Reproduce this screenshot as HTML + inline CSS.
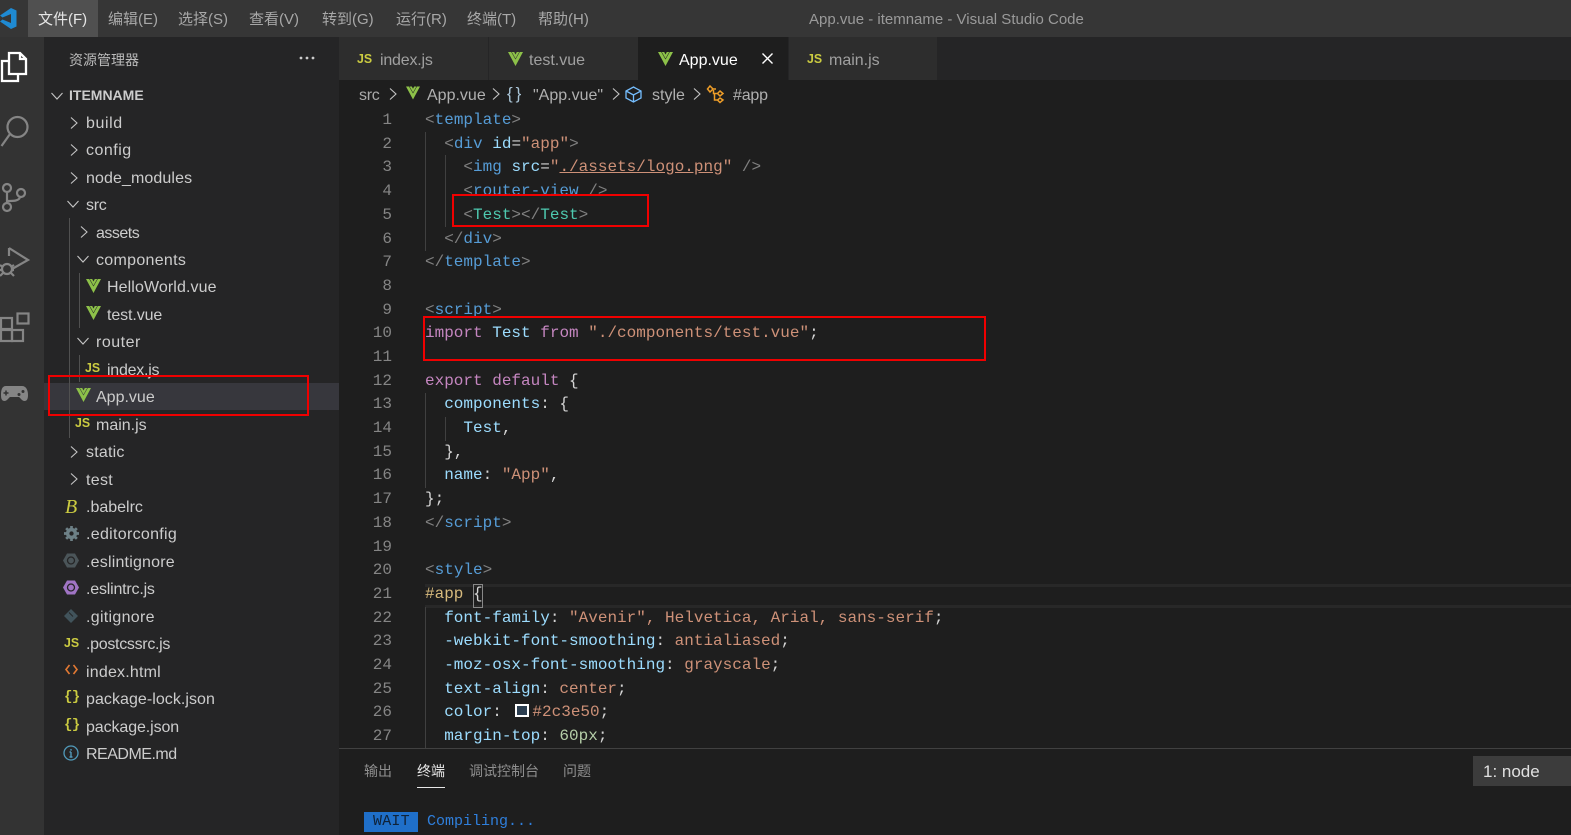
<!DOCTYPE html>
<html><head><meta charset="utf-8"><title>App.vue - itemname - Visual Studio Code</title>
<style>
html,body{margin:0;padding:0;background:#1e1e1e}
#p{position:relative;width:1571px;height:835px;overflow:hidden;background:#1e1e1e;font-family:"Liberation Sans","Noto Sans CJK SC",sans-serif}
#p>*{position:absolute}
.m{top:6px;height:28px;line-height:28px;font-size:15px;color:#a8a8a8;white-space:nowrap}
.r{height:28px;line-height:28px;font-size:16px;color:#cccccc;white-space:nowrap}
.js{font:bold 13px/16px "Liberation Sans",sans-serif;color:#cbcb41;white-space:nowrap;transform:scaleX(.95);transform-origin:left}
.c{left:425px;height:24px;font:16px/24px "Liberation Mono",monospace;color:#d4d4d4;white-space:pre}
.n{left:361px;width:31px;text-align:right;height:24px;font:16px/24px "Liberation Mono",monospace;color:#858585}
.g{width:1px;background:#404040}
.red{border:2px solid #f00000;box-sizing:border-box}
.t{top:37px;height:43px;background:#2d2d2d}
.pt{top:757px;height:28px;line-height:28px;font-size:14px;color:#8f8f8f;white-space:nowrap}
svg{overflow:visible}
.p{color:#808080}.k{color:#569cd6}.a{color:#9cdcfe}.s{color:#ce9178}.q{color:#4ec9b0}.i{color:#c586c0}.d{color:#d7ba7d}.u{color:#b5cea8}
</style></head><body>
<div id="p">
<svg width="0" height="0" style="position:absolute"><defs>
<symbol id="vue" viewBox="0 0 15 14"><polygon fill="#8dc149" points="0,0 3.200,0 7.500,7.500 11.800,0 15,0 7.500,14"/><polygon fill="#8dc149" points="3.800,0 6.200,0 7.500,2.500 8.800,0 11.200,0 7.500,6.500"/></symbol>
<symbol id="cr" viewBox="0 0 8 12"><path d="M1 0.500l6 5.500-6 5.500" fill="none" stroke="#c5c5c5" stroke-width="1.100"/></symbol>
<symbol id="cd" viewBox="0 0 12 8"><path d="M0.500 1l5.500 6 5.500-6" fill="none" stroke="#c5c5c5" stroke-width="1.100"/></symbol>
</defs></svg>

<!-- title bar -->
<div style="left:0;top:0;width:1571px;height:37px;background:#363636"></div>
<div style="left:28px;top:0;width:70px;height:37px;background:#505050"></div>
<svg style="left:0;top:8px" width="17" height="21" viewBox="0 0 17 21"><path d="M11 0l5.500 2.500V18.500L11 21 0 13.500l2.500-2L11 15V6L2.500 9.500 0 7.500z" fill="#1f8ad2"/></svg>
<div class="m" style="left:38px;color:#e6e6e6">文件(F)</div>
<div class="m" style="left:108px">编辑(E)</div>
<div class="m" style="left:178px">选择(S)</div>
<div class="m" style="left:249px">查看(V)</div>
<div class="m" style="left:322px">转到(G)</div>
<div class="m" style="left:396px">运行(R)</div>
<div class="m" style="left:467px">终端(T)</div>
<div class="m" style="left:538px">帮助(H)</div>
<div class="m" style="left:809px;color:#9a9a9a">App.vue - itemname - Visual Studio Code</div>

<!-- activity bar -->
<div style="left:0;top:37px;width:44px;height:798px;background:#333333"></div>
<svg style="left:0;top:50px" width="30" height="34" viewBox="0 0 30 34" fill="none" stroke="#fff" stroke-width="2.300"><path d="M9 3H20L26 9V24H9z"/><path d="M20 3v6h6"/><path d="M8 11H2V31H18V25"/></svg>
<svg style="left:0;top:113px" width="32" height="36" viewBox="0 0 32 36" fill="none" stroke="#858585" stroke-width="2.200"><circle cx="17.500" cy="14" r="10"/><path d="M10 21L1.500 33"/></svg>
<svg style="left:0;top:180px" width="28" height="34" viewBox="0 0 28 34" fill="none" stroke="#858585" stroke-width="2.200"><circle cx="7" cy="8" r="4"/><circle cx="21" cy="13" r="4"/><circle cx="7" cy="27" r="4"/><path d="M7 12V23M7 21C14 21 19 21 20 17"/></svg>
<svg style="left:0;top:245px" width="30" height="34" viewBox="0 0 30 34" fill="none" stroke="#858585" stroke-width="2.200"><path d="M9 3L28 15 12 24"/><path d="M9 3V11"/><circle cx="7" cy="24" r="5"/><path d="M0 20l3 2M14 20l-3 2M0 25h2M12 25h2M0 31l3-3M14 31l-3-3"/></svg>
<svg style="left:0;top:312px" width="30" height="32" viewBox="0 0 30 32" fill="none" stroke="#858585" stroke-width="2.200"><rect x="17.500" y="1.500" width="11" height="10"/><rect x="1" y="6" width="11" height="11"/><rect x="1" y="18" width="11" height="11"/><rect x="12" y="18" width="11" height="11"/></svg>
<svg style="left:0;top:385px" width="29" height="17" viewBox="0 0 29 17"><path d="M6 1H22C26 1 28 5 28 10 28 14 27 16 24.500 16 22 16 20.500 13 19 12H10C8.500 13 7 16 4.500 16 2 16 1 14 1 10 1 5 2 1 6 1z" fill="#858585"/><path d="M6 5.500v5M3.500 8h5" stroke="#333" stroke-width="1.500"/><circle cx="19" cy="9.500" r="1.500" fill="#333"/><circle cx="23" cy="6.500" r="1.500" fill="#333"/></svg>

<!-- sidebar -->
<div style="left:44px;top:37px;width:295px;height:798px;background:#252526"></div>
<div style="left:69px;top:46px;height:28px;line-height:28px;font-size:14px;color:#bbbbbb">资源管理器</div>
<svg style="left:299px;top:56px" width="16" height="4"><circle cx="2" cy="2" r="1.400" fill="#ccc"/><circle cx="8" cy="2" r="1.400" fill="#ccc"/><circle cx="14" cy="2" r="1.400" fill="#ccc"/></svg>
<div style="left:44px;top:383px;width:295px;height:27px;background:#37373d"></div>
<div class="g" style="left:69px;top:218px;height:220px;background:#505050"></div>
<div class="g" style="left:79px;top:273px;height:55px;background:#505050"></div>
<div class="g" style="left:79px;top:355px;height:27px;background:#505050"></div>

<svg style="left:51px;top:92px" width="12" height="8"><use href="#cd"/></svg>
<div class="r" style="left:69px;top:81px;font-size:14px;font-weight:bold">ITEMNAME</div>
<svg style="left:70px;top:117px" width="8" height="12"><use href="#cr"/></svg><div class="r" style="left:86px;top:110px;letter-spacing:.6px">build</div>
<svg style="left:70px;top:144px" width="8" height="12"><use href="#cr"/></svg><div class="r" style="left:86px;top:137px;letter-spacing:.5px">config</div>
<svg style="left:70px;top:172px" width="8" height="12"><use href="#cr"/></svg><div class="r" style="left:86px;top:165px;letter-spacing:.1px">node_modules</div>
<svg style="left:67px;top:200px" width="12" height="8"><use href="#cd"/></svg><div class="r" style="left:86px;top:192px;letter-spacing:-.3px">src</div>
<svg style="left:80px;top:226px" width="8" height="12"><use href="#cr"/></svg><div class="r" style="left:96px;top:220px;letter-spacing:-.5px">assets</div>
<svg style="left:77px;top:255px" width="12" height="8"><use href="#cd"/></svg><div class="r" style="left:96px;top:247px;letter-spacing:.3px">components</div>
<svg style="left:86px;top:279px" width="15" height="14"><use href="#vue"/></svg><div class="r" style="left:107px;top:274px;letter-spacing:.1px">HelloWorld.vue</div>
<svg style="left:86px;top:306px" width="15" height="14"><use href="#vue"/></svg><div class="r" style="left:107px;top:302px;letter-spacing:-.1px">test.vue</div>
<svg style="left:77px;top:337px" width="12" height="8"><use href="#cd"/></svg><div class="r" style="left:96px;top:329px;letter-spacing:.5px">router</div>
<div class="js" style="left:85px;top:360px">JS</div><div class="r" style="left:107px;top:357px;letter-spacing:-.25px">index.js</div>
<svg style="left:76px;top:388px" width="15" height="14"><use href="#vue"/></svg><div class="r" style="left:96px;top:384px">App.vue</div>
<div class="js" style="left:75px;top:415px">JS</div><div class="r" style="left:96px;top:412px">main.js</div>
<svg style="left:70px;top:446px" width="8" height="12"><use href="#cr"/></svg><div class="r" style="left:86px;top:439px;letter-spacing:.2px">static</div>
<svg style="left:70px;top:473px" width="8" height="12"><use href="#cr"/></svg><div class="r" style="left:86px;top:467px;letter-spacing:.3px">test</div>
<div style="left:65px;top:497px;font:italic 20px/20px 'Liberation Serif',serif;color:#cbcb41">B</div><div class="r" style="left:86px;top:494px">.babelrc</div>
<svg style="left:64px;top:526px" width="15" height="15" viewBox="0 0 14 14"><circle cx="7" cy="7" r="3.600" fill="none" stroke="#6d8086" stroke-width="3.200"/><path d="M7 0v3M7 11v3M0 7h3M11 7h3M2 2l2 2M10 10l2 2M12 2l-2 2M2 12l2-2" stroke="#6d8086" stroke-width="2.500"/></svg><div class="r" style="left:86px;top:521px;letter-spacing:.3px">.editorconfig</div>
<svg style="left:63px;top:553px" width="16" height="15" viewBox="0 0 16 15"><polygon points="4,0.500 12,0.500 16,7.500 12,14.500 4,14.500 0,7.500" fill="#4b5559"/><circle cx="8" cy="7.500" r="3.500" fill="none" stroke="#252526" stroke-width="1.300"/></svg><div class="r" style="left:86px;top:549px;letter-spacing:.2px">.eslintignore</div>
<svg style="left:63px;top:580px" width="16" height="15" viewBox="0 0 16 15"><polygon points="4,0.500 12,0.500 16,7.500 12,14.500 4,14.500 0,7.500" fill="#a074c4"/><circle cx="8" cy="7.500" r="3.500" fill="none" stroke="#252526" stroke-width="1.300"/></svg><div class="r" style="left:86px;top:576px;letter-spacing:-.2px">.eslintrc.js</div>
<svg style="left:64px;top:609px" width="14" height="14" viewBox="0 0 14 14"><polygon points="7,0 14,7 7,14 0,7" fill="#41535b"/><path d="M5 3.500l4 4" stroke="#252526"/></svg><div class="r" style="left:86px;top:604px;letter-spacing:.3px">.gitignore</div>
<div class="js" style="left:64px;top:635px">JS</div><div class="r" style="left:86px;top:631px;letter-spacing:-.3px">.postcssrc.js</div>
<svg style="left:65px;top:664px" width="13" height="11" viewBox="0 0 13 11" fill="none" stroke="#e37933" stroke-width="1.600"><path d="M4.500 1L1 5.500 4.500 10M8.500 1L12 5.500 8.500 10"/></svg><div class="r" style="left:86px;top:659px;letter-spacing:.2px">index.html</div>
<div style="left:64px;top:687px;font:bold 14px/20px 'Liberation Mono',monospace;color:#cbcb41;letter-spacing:-.5px">{}</div><div class="r" style="left:86px;top:686px;letter-spacing:.05px">package-lock.json</div>
<div style="left:64px;top:715px;font:bold 14px/20px 'Liberation Mono',monospace;color:#cbcb41;letter-spacing:-.5px">{}</div><div class="r" style="left:86px;top:714px;letter-spacing:-.1px">package.json</div>
<svg style="left:63px;top:745px" width="16" height="16" viewBox="0 0 16 16" fill="none" stroke="#519aba"><circle cx="8" cy="8" r="7" stroke-width="1.300"/><path d="M8 7v5M8 4v1.600M6.500 7H8M6.500 12h3" stroke-width="1.400"/></svg><div class="r" style="left:86px;top:741px;letter-spacing:-.5px">README.md</div>
<div class="red" style="left:48px;top:375px;width:261px;height:41px"></div>

<!-- tabs -->
<div style="left:339px;top:37px;width:1232px;height:43px;background:#252526"></div>
<div class="t" style="left:339px;width:149px"></div>
<div class="t" style="left:489px;width:149px"></div>
<div class="t" style="left:638px;width:150px;background:#1e1e1e"></div>
<div class="t" style="left:789px;width:148px"></div>
<div class="js" style="left:357px;top:51px">JS</div><div class="r" style="left:380px;top:47px;color:#a0a0a0;letter-spacing:-.2px">index.js</div>
<svg style="left:508px;top:52px" width="15" height="14"><use href="#vue"/></svg><div class="r" style="left:529px;top:47px;color:#a0a0a0">test.vue</div>
<svg style="left:658px;top:52px" width="15" height="14"><use href="#vue"/></svg><div class="r" style="left:679px;top:47px;color:#fff">App.vue</div>
<svg style="left:762px;top:53px" width="11" height="11" viewBox="0 0 11 11"><path d="M0.500 0.500l10 10M10.500 0.500l-10 10" stroke="#fff" stroke-width="1.400"/></svg>
<div class="js" style="left:807px;top:51px">JS</div><div class="r" style="left:829px;top:47px;color:#a0a0a0">main.js</div>

<!-- breadcrumb -->
<div class="r" style="left:359px;top:82px;color:#a9a9a9;letter-spacing:-.3px">src</div>
<svg style="left:389px;top:88px" width="8" height="12"><use href="#cr"/></svg>
<svg style="left:406px;top:86px" width="14" height="14"><use href="#vue"/></svg>
<div class="r" style="left:427px;top:82px;color:#b0b0b0">App.vue</div>
<svg style="left:492px;top:88px" width="8" height="12"><use href="#cr"/></svg>
<div style="left:507px;top:84px;font:17px/20px 'Liberation Sans',sans-serif;color:#a9c4d6;letter-spacing:3px">{}</div>
<div class="r" style="left:533px;top:82px;color:#b0b0b0">"App.vue"</div>
<svg style="left:612px;top:88px" width="8" height="12"><use href="#cr"/></svg>
<svg style="left:625px;top:86px" width="17" height="17" viewBox="0 0 17 17" fill="none" stroke="#75beff" stroke-width="1.300"><path d="M8.500 1L16 5V12L8.500 16 1 12V5zM1 5l7.500 4L16 5M8.500 9V16"/></svg>
<div class="r" style="left:652px;top:82px;color:#b0b0b0">style</div>
<svg style="left:693px;top:88px" width="8" height="12"><use href="#cr"/></svg>
<svg style="left:707px;top:85px" width="17" height="18" viewBox="0 0 17 18" fill="none" stroke="#ee9d28" stroke-width="1.500"><path d="M3 1l3 3-3 3-2.500-3zM13 6l3 2.500-3 2.500-2.500-2.500zM13 13l3 2-3 2.500-2.500-2.500zM6 4H9M10.500 8.500H6.500V5M10.500 15H7.500V8.500"/></svg>
<div class="r" style="left:733px;top:82px;color:#b0b0b0;letter-spacing:-.2px">#app</div>

<!-- editor -->
<div style="left:425px;top:584px;width:1146px;height:24px;box-sizing:border-box;border-top:3px solid #282828;border-bottom:3px solid #282828"></div>
<div style="left:473px;top:584px;width:10px;height:24px;box-sizing:border-box;border:1px solid #888"></div>
<div class="g" style="left:425px;top:132px;height:119px"></div>
<div class="g" style="left:445px;top:155px;height:72px"></div>
<div class="g" style="left:425px;top:393px;height:95px"></div>
<div class="g" style="left:445px;top:417px;height:24px"></div>
<div class="g" style="left:425px;top:607px;height:141px"></div>

<div class="n" style="top:108px">1</div><div class="c" style="top:108px"><span class="p">&lt;</span><span class="k">template</span><span class="p">&gt;</span></div>
<div class="n" style="top:132px">2</div><div class="c" style="top:132px">  <span class="p">&lt;</span><span class="k">div</span> <span class="a">id</span>=<span class="s">"app"</span><span class="p">&gt;</span></div>
<div class="n" style="top:155px">3</div><div class="c" style="top:155px">    <span class="p">&lt;</span><span class="k">img</span> <span class="a">src</span>=<span class="s">"<span style="text-decoration:underline">./assets/logo.png</span>"</span> <span class="p">/&gt;</span></div>
<div class="n" style="top:179px">4</div><div class="c" style="top:179px">    <span class="p">&lt;</span><span class="k">router-view</span> <span class="p">/&gt;</span></div>
<div class="n" style="top:203px">5</div><div class="c" style="top:203px">    <span class="p">&lt;</span><span class="q">Test</span><span class="p">&gt;&lt;/</span><span class="q">Test</span><span class="p">&gt;</span></div>
<div class="n" style="top:227px">6</div><div class="c" style="top:227px">  <span class="p">&lt;/</span><span class="k">div</span><span class="p">&gt;</span></div>
<div class="n" style="top:250px">7</div><div class="c" style="top:250px"><span class="p">&lt;/</span><span class="k">template</span><span class="p">&gt;</span></div>
<div class="n" style="top:274px">8</div>
<div class="n" style="top:298px">9</div><div class="c" style="top:298px"><span class="p">&lt;</span><span class="k">script</span><span class="p">&gt;</span></div>
<div class="n" style="top:321px">10</div><div class="c" style="top:321px"><span class="i">import</span> <span class="a">Test</span> <span class="i">from</span> <span class="s">"./components/test.vue"</span>;</div>
<div class="n" style="top:345px">11</div>
<div class="n" style="top:369px">12</div><div class="c" style="top:369px"><span class="i">export</span> <span class="i">default</span> {</div>
<div class="n" style="top:392px">13</div><div class="c" style="top:392px">  <span class="a">components</span>: {</div>
<div class="n" style="top:416px">14</div><div class="c" style="top:416px">    <span class="a">Test</span>,</div>
<div class="n" style="top:440px">15</div><div class="c" style="top:440px">  },</div>
<div class="n" style="top:463px">16</div><div class="c" style="top:463px">  <span class="a">name</span>: <span class="s">"App"</span>,</div>
<div class="n" style="top:487px">17</div><div class="c" style="top:487px">};</div>
<div class="n" style="top:511px">18</div><div class="c" style="top:511px"><span class="p">&lt;/</span><span class="k">script</span><span class="p">&gt;</span></div>
<div class="n" style="top:535px">19</div>
<div class="n" style="top:558px">20</div><div class="c" style="top:558px"><span class="p">&lt;</span><span class="k">style</span><span class="p">&gt;</span></div>
<div class="n" style="top:582px">21</div><div class="c" style="top:582px"><span class="d">#app</span> {</div>
<div class="n" style="top:606px">22</div><div class="c" style="top:606px">  <span class="a">font-family</span>: <span class="s">"Avenir", Helvetica, Arial, sans-serif</span>;</div>
<div class="n" style="top:629px">23</div><div class="c" style="top:629px">  <span class="a">-webkit-font-smoothing</span>: <span class="s">antialiased</span>;</div>
<div class="n" style="top:653px">24</div><div class="c" style="top:653px">  <span class="a">-moz-osx-font-smoothing</span>: <span class="s">grayscale</span>;</div>
<div class="n" style="top:677px">25</div><div class="c" style="top:677px">  <span class="a">text-align</span>: <span class="s">center</span>;</div>
<div class="n" style="top:700px">26</div><div class="c" style="top:700px">  <span class="a">color</span>: <span style="display:inline-block;box-sizing:border-box;width:14px;height:13px;margin:0 3px 0 4px;border:2px solid #fff;background:#2c3e50;vertical-align:-1px"></span><span class="s">#2c3e50</span>;</div>
<div class="n" style="top:724px">27</div><div class="c" style="top:724px">  <span class="a">margin-top</span>: <span class="u">60px</span>;</div>

<div class="red" style="left:452px;top:194px;width:197px;height:33px"></div>
<div class="red" style="left:423px;top:316px;width:563px;height:45px"></div>

<!-- panel -->
<div style="left:339px;top:748px;width:1232px;height:87px;background:#1e1e1e;border-top:1px solid #414141;box-sizing:border-box"></div>
<div class="pt" style="left:364px">输出</div>
<div class="pt" style="left:417px;color:#e7e7e7">终端</div>
<div style="left:417px;top:787px;width:28px;height:1px;background:#e7e7e7"></div>
<div class="pt" style="left:469px">调试控制台</div>
<div class="pt" style="left:563px">问题</div>
<div style="left:1473px;top:756px;width:98px;height:30px;background:#3c3c3c"></div>
<div class="r" style="left:1483px;top:758px;color:#e0e0e0;font-size:17px">1: node</div>
<div style="left:364px;top:812px;width:54px;height:20px;background:#1f6fc9"></div>
<div class="c" style="left:373px;top:810px;color:#0f2238;font-size:15px;letter-spacing:.2px">WAIT</div>
<div class="c" style="left:427px;top:810px;color:#2f7fdc;font-size:15px">Compiling...</div>
</div>
</body></html>
